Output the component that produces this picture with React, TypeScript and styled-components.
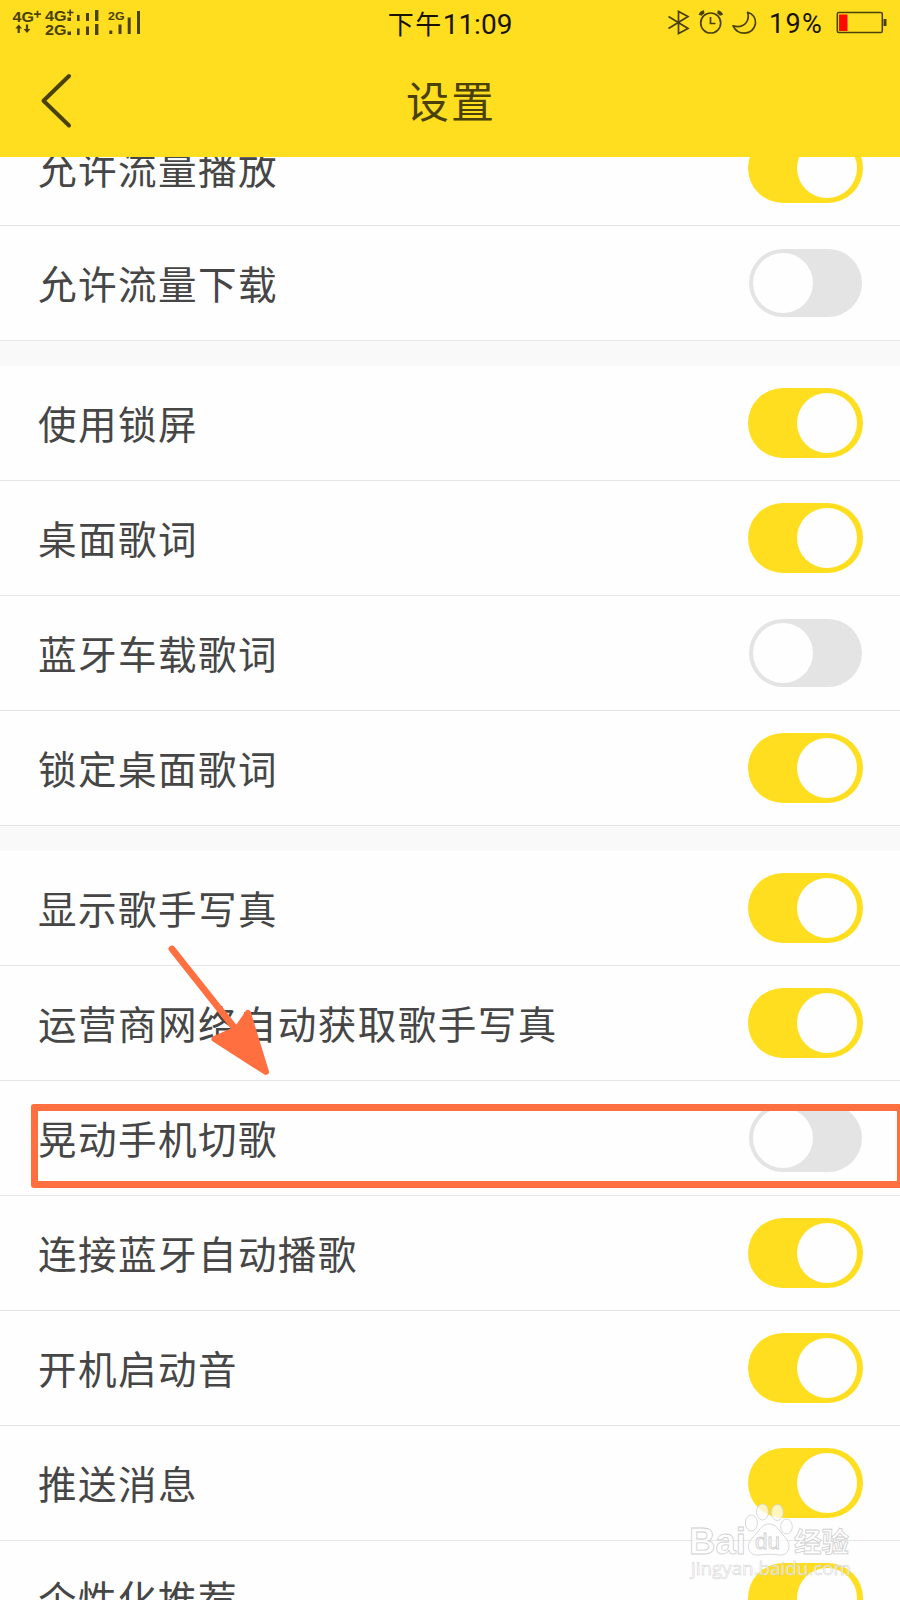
import React from "react";
import styled, { createGlobalStyle } from "styled-components";

const YELLOW = "#ffde20";
const INK = "#4a4108";
const ORANGE = "#ff6f40";

const GlobalStyle = createGlobalStyle`
  html, body { margin: 0; padding: 0; }
  body {
    font-family: "Noto Sans CJK SC", "Noto Sans", sans-serif;
    background: #fefefe;
  }
`;

const Screen = styled.div`
  position: relative;
  width: 900px;
  height: 1600px;
  overflow: hidden;
  display: flex;
  flex-direction: column;
  background: #fefefe;
`;

const Header = styled.header`
  flex: none;
  height: 157px;
  background: ${YELLOW};
  z-index: 1;
`;

const StatusBar = styled.div`
  display: grid;
  grid-template-columns: 1fr auto 1fr;
  align-items: center;
  height: 46px;
  color: #171300;
`;

const Signals = styled.svg`
  display: block;
  width: 160px;
  height: 46px;
  font-family: "Liberation Sans", sans-serif;
  font-weight: bold;
  fill: ${INK};
`;

const Clock = styled.div`
  display: flex;
  align-items: baseline;
  height: 46px;
  line-height: 46px;
  font-size: 26px;
  letter-spacing: 1.5px;
  white-space: nowrap;
`;

const Digits = styled.span`
  font-family: Roboto, sans-serif;
  font-size: 28px;
  letter-spacing: 0;
`;

const StatusRight = styled.div`
  justify-self: end;
  display: flex;
  align-items: center;
  height: 46px;
`;

const StatusIcons = styled.svg`
  display: block;
  width: 109px;
  height: 46px;
  fill: none;
  stroke: ${INK};
  stroke-width: 1.7;
`;

const Percent = styled.div`
  width: 65px;
  font-family: Roboto, sans-serif;
  font-size: 27px;
  letter-spacing: 1.3px;
  line-height: 46px;
  padding-top: 1px;
  white-space: nowrap;
`;

const Battery = styled.svg`
  display: block;
  width: 66px;
  height: 46px;
`;

const TitleBar = styled.div`
  display: grid;
  grid-template-columns: 100px 1fr 100px;
  align-items: center;
  height: 111px;
`;

const BackIcon = styled.svg`
  display: block;
  width: 100px;
  height: 111px;
  fill: none;
  stroke: ${INK};
  stroke-width: 4;
  stroke-linecap: round;
  stroke-linejoin: round;
`;

const Title = styled.h1`
  margin: 0;
  padding-left: 2px;
  text-align: center;
  font-size: 43px;
  letter-spacing: 2px;
  font-weight: 400;
  line-height: 106px;
  height: 111px;
  color: ${INK};
`;

const List = styled.main`
  flex: none;
  margin-top: -46px;
  display: flex;
  flex-direction: column;
  gap: 25px;
  background: #f9f9f9;
`;

const Group = styled.section`
  background: #fefefe;
`;

const Row = styled.div`
  box-sizing: border-box;
  display: flex;
  align-items: center;
  justify-content: space-between;
  height: 115px;
  padding: 0 37.5px 0 38px;
  border-bottom: 1px solid #e6e6e6;
`;

const Label = styled.span`
  font-size: 38.6px;
  letter-spacing: 1.4px;
  line-height: 58px;
  padding-bottom: 3px;
  color: #464646;
  white-space: nowrap;
`;

const Track = styled.span<{ $on: boolean }>`
  box-sizing: border-box;
  display: flex;
  align-items: center;
  justify-content: ${(p) => (p.$on ? "flex-end" : "flex-start")};
  width: ${(p) => (p.$on ? 115 : 113)}px;
  height: ${(p) => (p.$on ? 70 : 68)}px;
  margin-right: ${(p) => (p.$on ? 0 : 0.5)}px;
  padding: 0 ${(p) => (p.$on ? 5.3 : 3.7)}px;
  border-radius: 35px;
  background: ${(p) => (p.$on ? YELLOW : "#e4e4e4")};
`;

const Knob = styled.span`
  width: 60px;
  height: 60px;
  border-radius: 50%;
  background: #fefefe;
`;

const Highlight = styled.div`
  position: absolute;
  box-sizing: border-box;
  left: 31px;
  top: 1104px;
  width: 873px;
  height: 84px;
  border: 7px solid ${ORANGE};
  border-radius: 3px;
`;

const Arrow = styled.svg`
  position: absolute;
  left: 160px;
  top: 940px;
  width: 120px;
  height: 140px;
`;

const Watermark = styled.svg`
  position: absolute;
  left: 680px;
  top: 1490px;
  width: 190px;
  height: 110px;
  font-family: "Liberation Sans", "Noto Sans CJK SC", sans-serif;
`;

type Setting = { label: string; on: boolean };

const groups: Setting[][] = [
  [
    { label: "允许流量播放", on: true },
    { label: "允许流量下载", on: false },
  ],
  [
    { label: "使用锁屏", on: true },
    { label: "桌面歌词", on: true },
    { label: "蓝牙车载歌词", on: false },
    { label: "锁定桌面歌词", on: true },
  ],
  [
    { label: "显示歌手写真", on: true },
    { label: "运营商网络自动获取歌手写真", on: true },
    { label: "晃动手机切歌", on: false },
    { label: "连接蓝牙自动播歌", on: true },
    { label: "开机启动音", on: true },
    { label: "推送消息", on: true },
    { label: "个性化推荐", on: true },
  ],
];

function SignalIcons() {
  return (
    <Signals viewBox="0 0 160 46">
      <text x="12.5" y="22" fontSize="15" textLength="21.5" lengthAdjust="spacingAndGlyphs">4G</text>
      <path d="M34 14.2h7M37.5 10.7v7" stroke={INK} strokeWidth="1.7" />
      <path d="M18.7 24.5l3.4 4h-2.3v4.5h-2.2v-4.5h-2.3zM27 33l-3.4-4h2.3v-4.5h2.2v4.5h2.3z" />
      <text x="45" y="20.8" fontSize="15" textLength="21.5" lengthAdjust="spacingAndGlyphs">4G</text>
      <path d="M67 12.5h6.5M70.2 9.5v6.5" stroke={INK} strokeWidth="1.7" />
      <text x="45" y="34.5" fontSize="15" textLength="21.5" lengthAdjust="spacingAndGlyphs">2G</text>
      <path d="M67.5 17.5h3.5v3.5h-3.5zM77 15h2.6v6h-2.6zM86 13h3v8h-3zM95 10h3.4v11h-3.4z" />
      <path d="M67.5 31.5h3.5v3.5h-3.5zM77 28.5h2.6v6.5h-2.6zM86 26.5h3v8.5h-3zM95 24h3.4v11h-3.4z" />
      <text x="108" y="19.7" fontSize="11.5" textLength="16.5" lengthAdjust="spacingAndGlyphs">2G</text>
      <path d="M109.3 30.5h3v3.5h-3zM118.5 24.5h3v9.5h-3zM127.7 17.5h3v16.5h-3zM137 11h3v23h-3z" />
    </Signals>
  );
}

function Toggle({ on }: { on: boolean }) {
  return (
    <Track $on={on}>
      <Knob />
    </Track>
  );
}

export default function App() {
  return (
    <Screen>
      <GlobalStyle />
      <Header>
        <StatusBar>
          <SignalIcons />
          <Clock>
            下午<Digits>11:09</Digits>
          </Clock>
          <StatusRight>
            <StatusIcons viewBox="660 0 109 46">
              <path d="M668.5 16.5L688 28.5L678.5 33.5V11.5L688 16.5L668.5 28.5" />
              <circle cx="710.7" cy="23" r="10" />
              <path d="M710.5 17v6.5h5" />
              <path d="M700.2 15.3q1-3 4-3.3M717.5 12q3 .4 4 3.3" strokeWidth="3.4" />
              <path d="M747.5 12.3Q756 15 755.5 23.5Q753.5 32.8 744.5 33.2Q736.5 33 733 25.8Q741.5 28.5 746.3 22.5Q749.5 18 747.5 12.3Z" strokeLinejoin="round" />
            </StatusIcons>
            <Percent>19%</Percent>
            <Battery viewBox="834 0 66 46">
              <rect x="837.3" y="12.5" width="45" height="20" rx="1.5" fill="none" stroke={INK} strokeWidth="1.5" />
              <rect x="839" y="14.5" width="8.5" height="16.5" fill="#ff0a00" />
              <rect x="883.5" y="19" width="3" height="7" fill={INK} />
            </Battery>
          </StatusRight>
        </StatusBar>
        <TitleBar>
          <BackIcon viewBox="0 46 100 111">
            <path d="M69 76L43.5 100.8L69 125.5" />
          </BackIcon>
          <Title>设置</Title>
        </TitleBar>
      </Header>

      <List>
        {groups.map((group, i) => (
          <Group key={i}>
            {group.map((s) => (
              <Row key={s.label}>
                <Label>{s.label}</Label>
                <Toggle on={s.on} />
              </Row>
            ))}
          </Group>
        ))}
      </List>

      <Highlight />
      <Arrow viewBox="160 940 120 140" fill={ORANGE} stroke={ORANGE} strokeLinejoin="round" strokeLinecap="round">
        <path d="M172 949L237 1031" strokeWidth="6.8" fill="none" />
        <path d="M214.5 1039L237 1029L248 1013L266 1072Z" strokeWidth="6" />
      </Arrow>

      <Watermark viewBox="680 1490 190 110" fill="#fefefe" fillOpacity="0.72" stroke="#cfcfcf" strokeWidth="0.8">
        <text x="689" y="1553.5" fontSize="37" fontWeight="700" textLength="57" lengthAdjust="spacingAndGlyphs">Bai</text>
        <ellipse cx="751.3" cy="1523" rx="6" ry="8" />
        <ellipse cx="762.5" cy="1512" rx="6" ry="8" />
        <ellipse cx="777.3" cy="1512.5" rx="6" ry="8" />
        <ellipse cx="786.5" cy="1526.5" rx="5.8" ry="7.5" />
        <path d="M769 1524C777 1524 779 1531 784 1536C793 1545 789 1556 779 1555C773 1554 765 1554 759 1555C748 1556 745 1545 753 1537C759 1532 761 1524 769 1524Z" />
        <text x="755" y="1549" fontSize="22" textLength="25" lengthAdjust="spacingAndGlyphs">du</text>
        <text x="794" y="1551.5" fontSize="27.5" fontWeight="700" textLength="55">经验</text>
        <text x="691" y="1575" fontSize="19" fontFamily="Open Sans" textLength="160" lengthAdjust="spacingAndGlyphs" strokeWidth="0.5">jingyan.baidu.com</text>
      </Watermark>
    </Screen>
  );
}
